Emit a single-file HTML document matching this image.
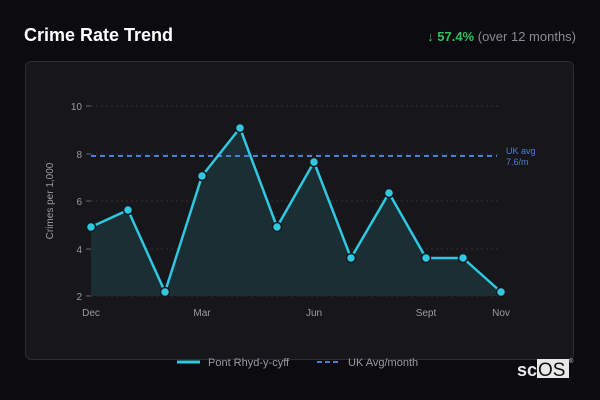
<!DOCTYPE html>
<html><head><style>
body{margin:0;width:600px;height:400px;background:#0c0b10;font-family:"Liberation Sans",sans-serif;overflow:hidden;position:relative}
.t{position:absolute;left:24px;top:25px;color:#fff;font-weight:bold;font-size:18px}
.r{position:absolute;right:24px;top:29px;font-size:13px;color:#8a8a90}
.r b{color:#2fbf5f}
.card{position:absolute;left:25px;top:61px;width:549px;height:299px;background:#17171b;border:1px solid #2c2c31;border-radius:6px;box-sizing:border-box}
svg{position:absolute;left:0;top:0}
</style></head><body>
<div class="t">Crime Rate Trend</div>
<div class="r"><b>↓ 57.4%</b> (over 12 months)</div>
<div class="card"></div>
<svg width="600" height="400" font-family="Liberation Sans, sans-serif">
<g stroke="#303036" stroke-dasharray="2,3" stroke-width="1">
<line x1="91" x2="501" y1="106" y2="106"/><line x1="91" x2="501" y1="154" y2="154"/><line x1="91" x2="501" y1="201" y2="201"/><line x1="91" x2="501" y1="249" y2="249"/><line x1="91" x2="501" y1="296" y2="296"/>
</g>
<g stroke="#666" stroke-width="1"><line x1="86" x2="91" y1="106" y2="106"/><line x1="86" x2="91" y1="154" y2="154"/><line x1="86" x2="91" y1="201" y2="201"/><line x1="86" x2="91" y1="249" y2="249"/><line x1="86" x2="91" y1="296" y2="296"/></g>
<g fill="#9a9aa0" font-size="10" text-anchor="end"><text x="82" y="110">10</text><text x="82" y="158">8</text><text x="82" y="205">6</text><text x="82" y="253">4</text><text x="82" y="300">2</text></g>
<text transform="translate(53,201) rotate(-90)" fill="#9a9aa0" font-size="10" text-anchor="middle">Crimes per 1,000</text>
<g fill="#9a9aa0" font-size="10" text-anchor="middle"><text x="91" y="316">Dec</text><text x="202" y="316">Mar</text><text x="314" y="316">Jun</text><text x="426" y="316">Sept</text><text x="501" y="316">Nov</text></g>
<polygon fill="#1b2e33" points="91,296 91,227 128,210 165,292 202,176 240,128 277,227 314,162 351,258 389,193 426,258 463,258 501,292 501,296"/>
<line x1="91" x2="497" y1="156" y2="156" stroke="#4a7fd8" stroke-width="2" stroke-dasharray="5,4"/>
<text x="506" y="154" fill="#4a7fd8" font-size="9">UK avg</text><text x="506" y="165" fill="#4a7fd8" font-size="9">7.6/m</text>
<polyline fill="none" stroke="#2ec8e0" stroke-width="2.5" stroke-linejoin="round" points="91,227 128,210 165,292 202,176 240,128 277,227 314,162 351,258 389,193 426,258 463,258 501,292"/>
<g fill="#2ec8e0" stroke="#17171b" stroke-width="1.5">
<circle cx="91" cy="227" r="4.5"/><circle cx="128" cy="210" r="4.5"/><circle cx="165" cy="292" r="4.5"/><circle cx="202" cy="176" r="4.5"/><circle cx="240" cy="128" r="4.5"/><circle cx="277" cy="227" r="4.5"/><circle cx="314" cy="162" r="4.5"/><circle cx="351" cy="258" r="4.5"/><circle cx="389" cy="193" r="4.5"/><circle cx="426" cy="258" r="4.5"/><circle cx="463" cy="258" r="4.5"/><circle cx="501" cy="292" r="4.5"/>
</g>
<line x1="177" x2="200" y1="362" y2="362" stroke="#2ec8e0" stroke-width="3"/>
<text x="208" y="366" fill="#9a9aa0" font-size="11">Pont Rhyd-y-cyff</text>
<line x1="317" x2="340" y1="362" y2="362" stroke="#4a7fd8" stroke-width="2" stroke-dasharray="5,3"/>
<text x="348" y="366" fill="#9a9aa0" font-size="11">UK Avg/month</text>
<rect x="537" y="359" width="32" height="19" fill="#e8e8e8"/>
<text x="517" y="376" fill="#e8e8e8" font-size="18" font-weight="bold">sc</text>
<text x="538" y="376" fill="#111" font-size="19">OS</text>
<text x="569" y="363" fill="#ccc" font-size="6">®</text>
</svg>
</body></html>
